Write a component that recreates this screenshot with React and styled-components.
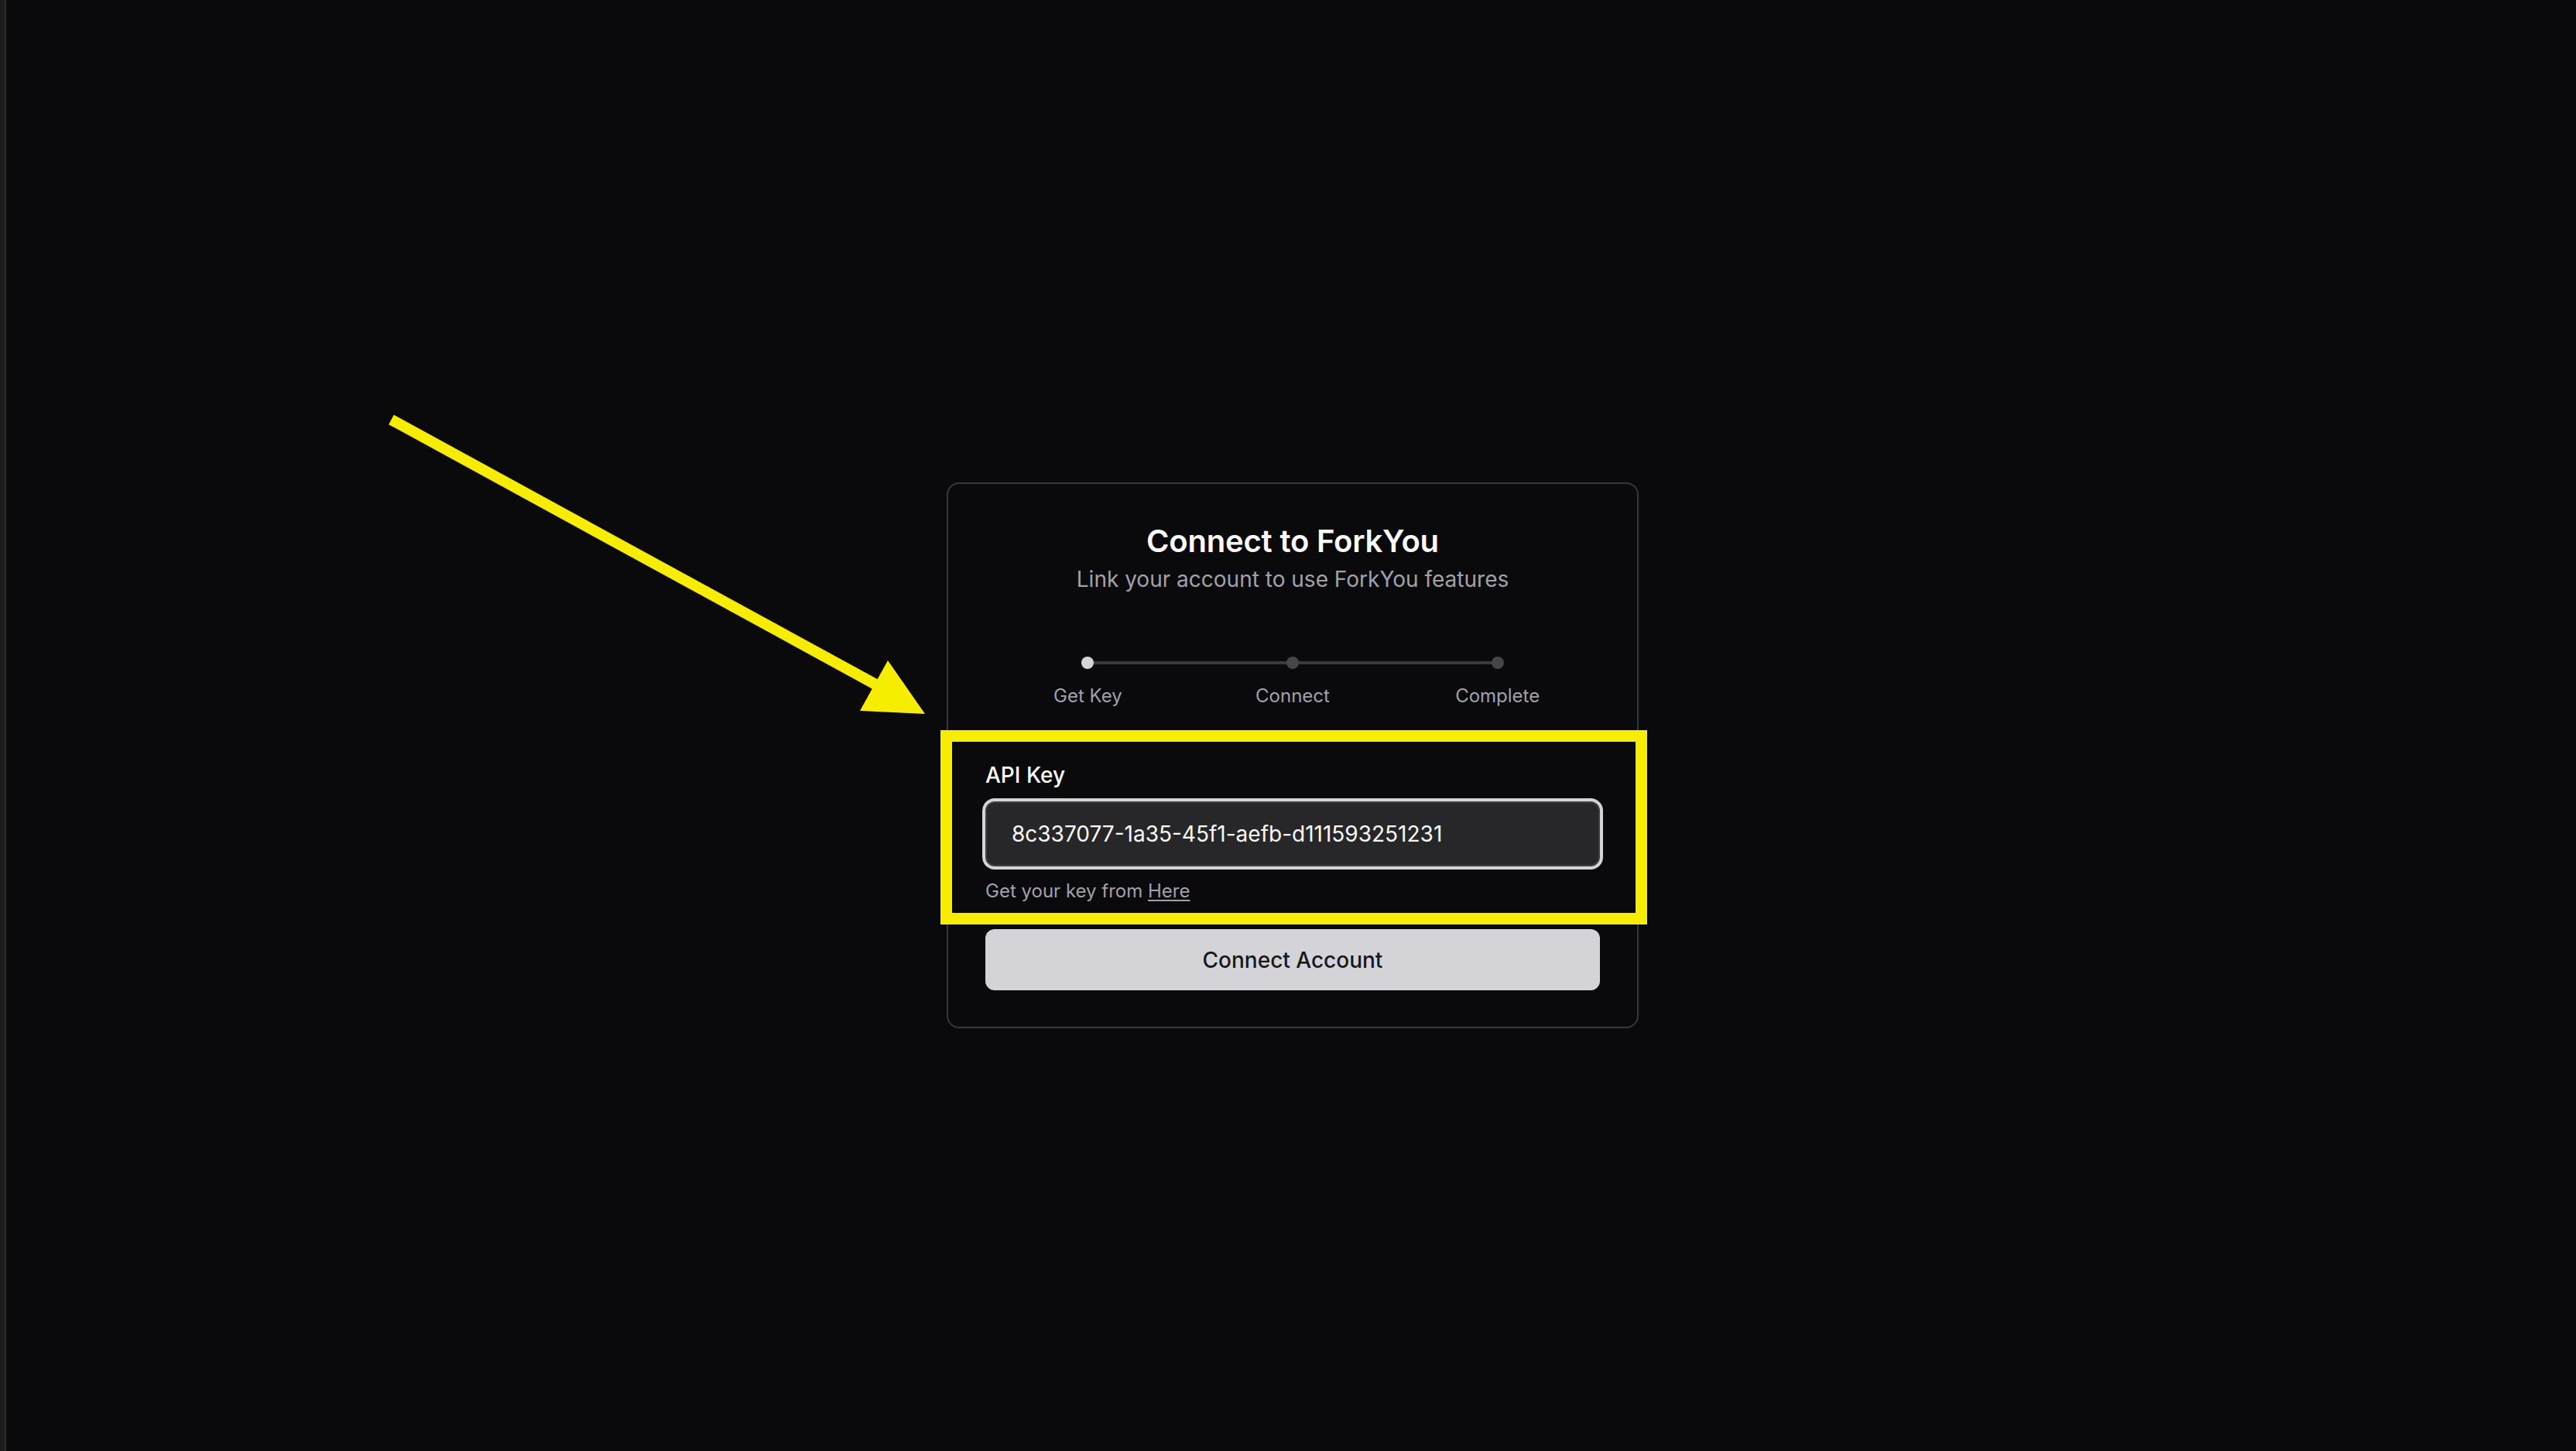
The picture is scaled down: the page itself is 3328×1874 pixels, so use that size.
import React from "react";
import styled, { createGlobalStyle } from "styled-components";

const Global = createGlobalStyle`
  html, body { margin: 0; padding: 0; background: #0a0a0c; }
  body { font-family: Inter, "Noto Sans", sans-serif; -webkit-font-smoothing: antialiased; }
  * { box-sizing: border-box; }
`;

const Page = styled.div`
  position: relative;
  display: flex;
  width: 3328px;
  height: 1874px;
  overflow: hidden;
  background: #0a0a0c;
`;

const EdgeStrip = styled.div`
  width: 8px;
  flex: none;
  background: #1c1c1d;
  border-right: 2px solid #2b2b2c;
`;

const Main = styled.main`
  flex: 1;
  display: flex;
  justify-content: center;
  align-items: flex-start;
  padding-top: 623px;
  padding-left: 4px;
`;

const Card = styled.section`
  position: relative;
  width: 894px;
  border: 2px solid #36363b;
  border-radius: 16px;
  background: #0a0a0c;
  padding: 51px 48px 47px;
  display: flex;
  flex-direction: column;
`;

const Title = styled.h1`
  margin: 0;
  text-align: center;
  font-size: 40px;
  line-height: 46px;
  font-weight: 600;
  color: #fafafa;
  letter-spacing: -0.2px;
`;

const Subtitle = styled.p`
  margin: 6px 0 0;
  text-align: center;
  font-size: 28px;
  line-height: 40px;
  color: #a1a1aa;
`;

const Stepper = styled.ol`
  position: relative;
  list-style: none;
  margin: 80px 0 0;
  padding: 0;
  display: grid;
  grid-template-columns: repeat(3, 1fr);
`;

const Connector = styled.div`
  position: absolute;
  top: 6px;
  left: calc(100% / 6);
  right: calc(100% / 6);
  height: 4px;
  background: #3a3a40;
`;

const Step = styled.li`
  position: relative;
  display: flex;
  flex-direction: column;
  align-items: center;
  gap: 19px;
`;

const Dot = styled.span`
  width: 16px;
  height: 16px;
  border-radius: 50%;
  background: ${(p) => (p.$active ? "#d4d4d8" : "#45454b")};
`;

const StepLabel = styled.span`
  font-size: 24px;
  line-height: 32px;
  color: #a1a1aa;
`;

const Field = styled.div`
  margin-top: 72px;
  display: flex;
  flex-direction: column;
`;

const Label = styled.label`
  font-size: 28px;
  line-height: 28px;
  font-weight: 500;
  color: #fafafa;
`;

const Input = styled.input`
  margin-top: 20px;
  width: 100%;
  height: 84px;
  border: 2px solid #3f3f46;
  border-radius: 12px;
  background: #27272a;
  box-shadow: 0 0 0 4px #d4d4d8;
  padding: 0 32px;
  font-family: Inter, "Noto Sans", sans-serif;
  font-size: 28px;
  color: #fafafa;
  outline: none;
`;

const Helper = styled.p`
  margin: 16px 0 0;
  font-size: 24px;
  line-height: 32px;
  color: #a1a1aa;
`;

const HelperLink = styled.a`
  color: #a1a1aa;
  text-decoration: underline;
  text-underline-offset: 3px;
`;

const Button = styled.button`
  margin-top: 33px;
  height: 79px;
  width: 100%;
  border: none;
  border-radius: 12px;
  background: #d4d4d8;
  color: #18181b;
  font-family: Inter, "Noto Sans", sans-serif;
  font-size: 28px;
  font-weight: 500;
  cursor: pointer;
`;

const Highlight = styled.div`
  position: absolute;
  left: -10px;
  top: 318px;
  width: 913px;
  height: 251px;
  border: 15px solid #f6ed00;
  pointer-events: none;
`;

const ArrowLayer = styled.svg`
  position: absolute;
  left: 0;
  top: 0;
  pointer-events: none;
`;

const steps = ["Get Key", "Connect", "Complete"];

export default function App() {
  return (
    <>
      <Global />
      <Page>
        <EdgeStrip />
        <Main>
          <Card>
            <Title>Connect to ForkYou</Title>
            <Subtitle>Link your account to use ForkYou features</Subtitle>
            <Stepper>
              <Connector />
              {steps.map((s, i) => (
                <Step key={s}>
                  <Dot $active={i === 0} />
                  <StepLabel>{s}</StepLabel>
                </Step>
              ))}
            </Stepper>
            <Field>
              <Label htmlFor="api-key">API Key</Label>
              <Input id="api-key" defaultValue="8c337077-1a35-45f1-aefb-d111593251231" readOnly />
              <Helper>
                Get your key from <HelperLink href="#">Here</HelperLink>
              </Helper>
            </Field>
            <Button>Connect Account</Button>
            <Highlight />
          </Card>
        </Main>
        <ArrowLayer width="3328" height="1874" viewBox="0 0 3328 1874">
          <line x1="505.5" y1="542" x2="1135" y2="886" stroke="#f6ed00" strokeWidth="14" />
          <polygon points="1147,853 1195,922 1111,918" fill="#f6ed00" />
        </ArrowLayer>
      </Page>
    </>
  );
}
